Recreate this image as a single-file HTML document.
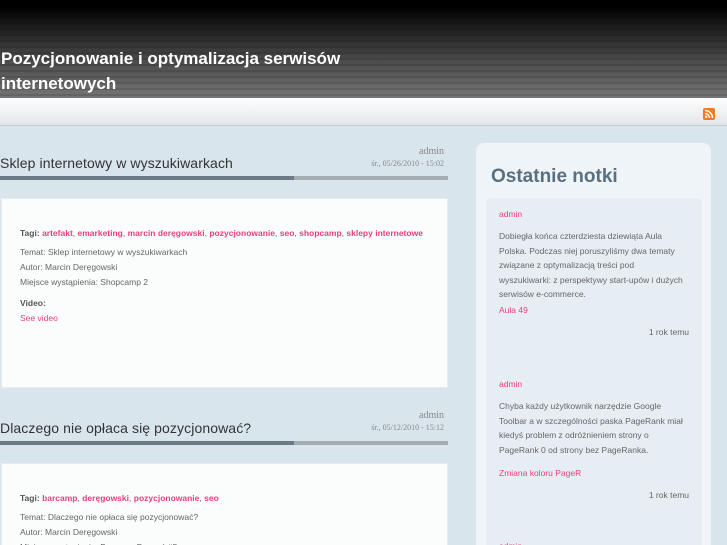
<!DOCTYPE html>
<html><head><meta charset="utf-8"><style>
*{margin:0;padding:0;box-sizing:border-box}
html,body{width:727px;height:545px;overflow:hidden}
body{background:#d9e5ec;font-family:"Liberation Sans",sans-serif;position:relative}
.hdr{position:absolute;left:0;top:0;width:727px;height:98px;background:repeating-linear-gradient(to bottom,rgba(0,0,0,0) 0 4px,rgba(0,0,0,.12) 4px 6px),linear-gradient(to bottom,#000 0,#000 7px,#1a1a1a 25px,#4a4a4a 60px,#757575 98px)}
.hdr h1{position:absolute;left:1px;top:46px;color:#fff;font-size:17px;font-weight:bold;line-height:25px;width:400px}
.bar{position:absolute;left:0;top:98px;width:727px;height:28px;background:linear-gradient(#fdfdfd,#e3e7ea);border-bottom:1px solid #c6ced4}
.rss{position:absolute;left:703px;top:108px}
.title{position:absolute;left:0;font-size:14px;color:#333;letter-spacing:0.1px}
.line{position:absolute;left:0;width:448px;height:4px;background:linear-gradient(to right,#6b7a85 0,#6b7a85 294px,#a5adb2 294px)}
.meta{position:absolute;right:283px;text-align:right;font-family:"Liberation Serif",serif;color:#888}
.card{position:absolute;left:1px;width:447px;background:#fbfcfc;border:1px solid #e6ecef;font-size:8.5px;color:#666;padding-left:18px}
.card p{line-height:15px}
.pink{color:#e8407f}
b{color:#555}
.side{position:absolute;left:476px;top:143px;width:235px;height:420px;background:#eef4f8;border-radius:8px}
.side h2{position:absolute;left:15px;top:23px;font-size:19px;color:#5a7080;font-weight:bold}
.inner{position:absolute;left:485px;top:197px;width:218px;height:360px;background:#e6eef3;border:1px solid #f4f7f9;border-radius:5px;font-size:8.5px;color:#666}
.inner div{position:absolute;left:13px;width:200px;line-height:14.5px;white-space:nowrap}
</style></head><body>
<div class="hdr"><h1>Pozycjonowanie i optymalizacja serwisów internetowych</h1></div>
<div class="bar"></div>
<svg class="rss" width="12" height="12" viewBox="0 0 12 12"><rect width="12" height="12" rx="2" fill="#f37a21"/><circle cx="3.2" cy="8.8" r="1.2" fill="#fff"/><path d="M2 5.5a4.5 4.5 0 0 1 4.5 4.5M2 2.5a7.5 7.5 0 0 1 7.5 7.5" stroke="#fff" stroke-width="1.4" fill="none"/></svg>

<div class="meta" style="top:146px;font-size:10px">admin</div>
<div class="meta" style="top:159px;font-size:8px">śr., 05/26/2010 - 15:02</div>
<div class="title" style="top:155px">Sklep internetowy w wyszukiwarkach</div>
<div class="line" style="top:176px"></div>
<div class="card" style="top:198px;height:190px">
<p style="margin-top:27px"><b>Tagi:</b> <b class="pink">artefakt</b>, <b class="pink">emarketing</b>, <b class="pink">marcin deręgowski</b>, <b class="pink">pozycjonowanie</b>, <b class="pink">seo</b>, <b class="pink">shopcamp</b>, <b class="pink">sklepy internetowe</b></p>
<p style="margin-top:4px">Temat: Sklep internetowy w wyszukiwarkach</p>
<p>Autor: Marcin Deręgowski</p>
<p>Miejsce wystąpienia: Shopcamp 2</p>
<p style="margin-top:6px"><b>Video:</b></p>
<p class="pink">See video</p>
</div>

<div class="meta" style="top:410px;font-size:10px">admin</div>
<div class="meta" style="top:423px;font-size:8px">śr., 05/12/2010 - 15:12</div>
<div class="title" style="top:420px">Dlaczego nie opłaca się pozycjonować?</div>
<div class="line" style="top:441px"></div>
<div class="card" style="top:463px;height:100px">
<p style="margin-top:27px"><b>Tagi:</b> <b class="pink">barcamp</b>, <b class="pink">deręgowski</b>, <b class="pink">pozycjonowanie</b>, <b class="pink">seo</b></p>
<p style="margin-top:4px">Temat: Dlaczego nie opłaca się pozycjonować?</p>
<p>Autor: Marcin Deręgowski</p>
<p>Miejsce wystąpienia: Barcamp Poznań #5</p>
</div>

<div class="side"><h2>Ostatnie notki</h2></div>
<div class="inner">
<div class="pink" style="top:9px">admin</div>
<div style="top:31px">Dobiegła końca czterdziesta dziewiąta Aula<br>Polska. Podczas niej poruszyliśmy dwa tematy<br>związane z optymalizacją treści pod<br>wyszukiwarki: z perspektywy start-upów i dużych<br>serwisów e-commerce.</div>
<div class="pink" style="top:105px">Aula 49</div>
<div style="top:127px;text-align:right;width:190px">1 rok temu</div>
<div class="pink" style="top:179px">admin</div>
<div style="top:201px">Chyba każdy użytkownik narzędzie Google<br>Toolbar a w szczególności paska PageRank miał<br>kiedyś problem z odróżnieniem strony o<br>PageRank 0 od strony bez PageRanka.</div>
<div class="pink" style="top:268px">Zmiana koloru PageR</div>
<div style="top:290px;text-align:right;width:190px">1 rok temu</div>
<div class="pink" style="top:341px">admin</div>
</div>
</body></html>
